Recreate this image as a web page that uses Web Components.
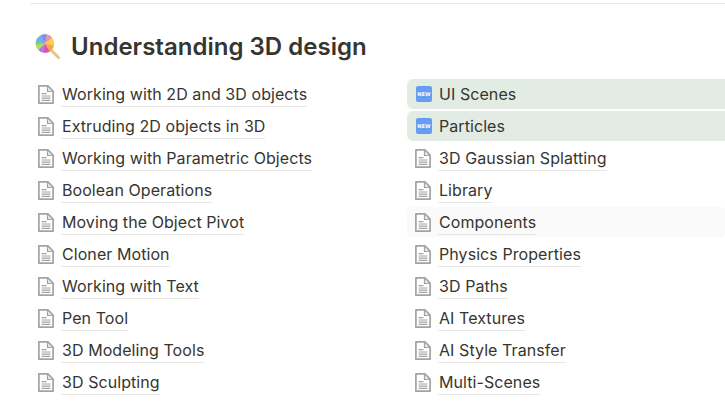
<!DOCTYPE html>
<html lang="en">
<head>
<meta charset="utf-8">
<title>Understanding 3D design</title>
<style>
  html, body { margin: 0; background: #fff; overflow: hidden; }
  body { font-family: Inter, "Liberation Sans", sans-serif; color: #37352f; }
</style>
</head>
<body>
<doc-page>
  <doc-heading>Understanding 3D design</doc-heading>
  <doc-columns>
    <doc-link>Working with 2D and 3D objects</doc-link>
    <doc-link variant="new">UI Scenes</doc-link>
    <doc-link>Extruding 2D objects in 3D</doc-link>
    <doc-link variant="new">Particles</doc-link>
    <doc-link>Working with Parametric Objects</doc-link>
    <doc-link>3D Gaussian Splatting</doc-link>
    <doc-link>Boolean Operations</doc-link>
    <doc-link>Library</doc-link>
    <doc-link>Moving the Object Pivot</doc-link>
    <doc-link hovered>Components</doc-link>
    <doc-link>Cloner Motion</doc-link>
    <doc-link>Physics Properties</doc-link>
    <doc-link>Working with Text</doc-link>
    <doc-link>3D Paths</doc-link>
    <doc-link>Pen Tool</doc-link>
    <doc-link>AI Textures</doc-link>
    <doc-link>3D Modeling Tools</doc-link>
    <doc-link>AI Style Transfer</doc-link>
    <doc-link>3D Sculpting</doc-link>
    <doc-link>Multi-Scenes</doc-link>
  </doc-columns>
</doc-page>

<script>
class DocPage extends HTMLElement {
  constructor() {
    super();
    this.attachShadow({ mode: 'open' });
    this.shadowRoot.innerHTML = `
      <style>
        :host { display: block; padding: 3px 0 0 30px; }
        hr { margin: 0; border: 0; height: 1px; background: #e9e9e7; }
      </style>
      <hr>
      <slot></slot>
    `;
  }
}

class DocHeading extends HTMLElement {
  constructor() {
    super();
    this.attachShadow({ mode: 'open' });
    this.shadowRoot.innerHTML = `
      <style>
        :host {
          display: flex;
          align-items: center;
          gap: 11px;
          height: 30px;
          padding: 27px 0 18px 5px;
          font-size: 24px;
          font-weight: 600;
          letter-spacing: 0.02px;
          color: #37352f;
        }
        svg { width: 25px; height: 25px; flex: none; }
      </style>
      <svg viewBox="0 0 25 25" aria-hidden="true">
        <path d="M14.5 14.5 L23.5 23.5" stroke="#e3c58e" stroke-width="3" stroke-linecap="round"/>
        <circle cx="10" cy="9.5" r="9.3" fill="#f9d24a"/>
        <path d="M10 9.5 L5.5 1.4 A9.3 9.3 0 0 1 12 .4 Z" fill="#7b8ff0"/>
        <path d="M10 9.5 L.9 7.6 A9.3 9.3 0 0 1 5.5 1.4 Z" fill="#6fb0f2"/>
        <path d="M10 9.5 L.8 11 A9.3 9.3 0 0 1 .9 7.6 Z" fill="#58d6a0"/>
        <path d="M10 9.5 L3.4 16 A9.3 9.3 0 0 1 .8 11 Z" fill="#b6de58"/>
        <path d="M10 9.5 L8 18.6 A9.3 9.3 0 0 1 3.4 16 Z" fill="#a67cf0"/>
        <path d="M10 9.5 L15 17.4 A9.3 9.3 0 0 1 8 18.6 Z" fill="#df4fb8"/>
        <path d="M10 9.5 L19 11.5 A9.3 9.3 0 0 1 15 17.4 Z" fill="#f7a84c"/>
        <path d="M10 9.5 L12 .4 A9.3 9.3 0 0 1 17 3.4 Z" fill="#f28cc0"/>
      </svg>
      <span><slot></slot></span>
    `;
  }
}

class DocColumns extends HTMLElement {
  constructor() {
    super();
    this.attachShadow({ mode: 'open' });
    this.shadowRoot.innerHTML = `
      <style>
        :host {
          display: grid;
          grid-template-columns: 377px 318px;
          row-gap: 2px;
        }
      </style>
      <slot></slot>
    `;
  }
}

class DocLink extends HTMLElement {
  static get observedAttributes() {
    return ['variant', 'hovered'];
  }

  constructor() {
    super();
    this.attachShadow({ mode: 'open' });
  }

  connectedCallback() {
    this.render();
  }

  attributeChangedCallback() {
    if (this.shadowRoot.innerHTML) {
      this.render();
    }
  }

  render() {
    const isNew = this.getAttribute('variant') === 'new';

    const docIcon = `
      <svg viewBox="0 0 16 19" width="16" height="19" aria-hidden="true">
        <path d="M.9 .9h9l5.2 5.3v12H.9z" fill="#fff" stroke="#a3a3a1" stroke-width="1.7" stroke-linejoin="round"/>
        <path d="M9.6 1.2v5.2h5.2" fill="none" stroke="#a3a3a1" stroke-width="1.4"/>
        <path d="M3.6 8.7h5M3.6 11h8.8M3.6 13.2h8.8M3.6 15.4h8.8" stroke="#a3a3a1" stroke-width="1.2"/>
      </svg>`;

    const newIcon = `
      <svg viewBox="0 0 16 16" width="16" height="16" aria-hidden="true">
        <rect width="16" height="16" rx="2" fill="#669df1"/>
        <text x="8" y="9.8" text-anchor="middle" font-family="'DejaVu Sans', sans-serif" font-size="5" font-weight="700" fill="#fff">NEW</text>
      </svg>`;

    this.shadowRoot.innerHTML = `
      <style>
        :host {
          display: flex;
          align-items: center;
          height: 30px;
          padding-left: 8px;
          border-radius: 4px;
          font-size: 16px;
          line-height: 24px;
          letter-spacing: 0.07px;
          color: #37352f;
        }
        :host([variant="new"]) { background: #e2ece4; border-radius: 6px 0 0 6px; }
        :host([hovered]) { background: #fafafa; }
        .icon { display: flex; width: 16px; height: 19px; align-items: center; flex: none; }
        :host([variant="new"]) svg { margin-left: 1px; flex: none; }
        .label { margin: 1px 0 0 7px; padding-left: 1px; border-bottom: 1px solid #e6e6e5; height: 24px; }
        :host([variant="new"]) .label { border-bottom-color: transparent; }
      </style>
      <span class="icon">${isNew ? newIcon : docIcon}</span>
      <span class="label"><slot></slot></span>
    `;
  }
}

customElements.define('doc-page', DocPage);
customElements.define('doc-heading', DocHeading);
customElements.define('doc-columns', DocColumns);
customElements.define('doc-link', DocLink);
</script>
</body>
</html>
